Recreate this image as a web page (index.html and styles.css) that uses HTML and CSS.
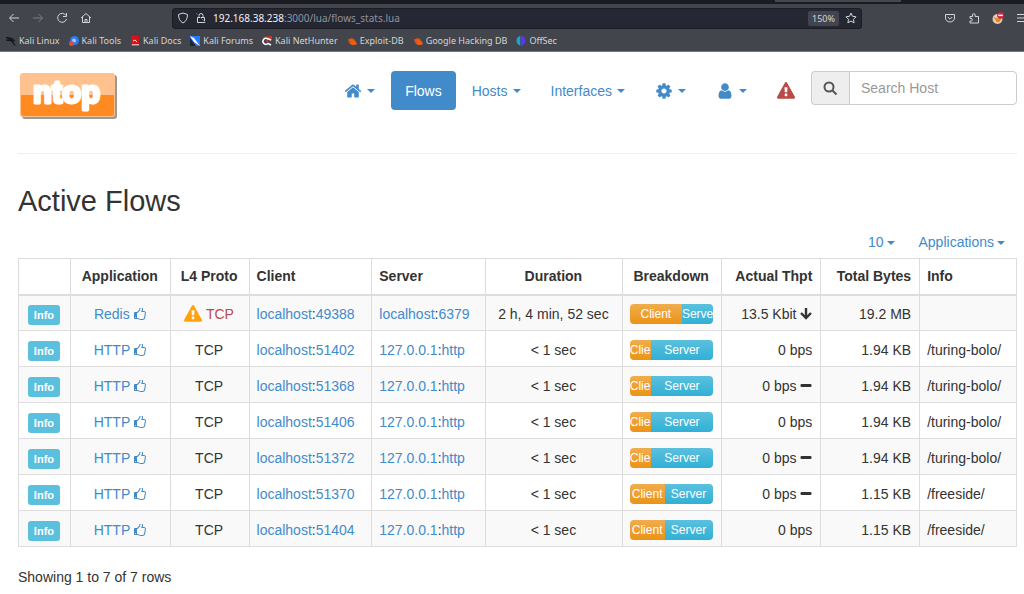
FILE: index.html
```html
<!DOCTYPE html>
<html lang="en">
    <head>
        <title>Active Flows</title>
        <meta charset="utf-8">
        <link rel="stylesheet" href="styles.css">
    </head>
    <body>
        <!-- icons -->
        <svg class="sprite">
            <symbol id="home" viewBox="0 0 1792 1792"><path d="M1472 992v480q0 26-19 45t-45 19h-384v-384h-256v384h-384q-26 0-45-19t-19-45v-480q0-1 .5-3t.5-3l575-474 575 474q1 2 1 6zm223-69l-62 74q-8 9-21 11h-3q-13 0-21-7l-692-577-692 577q-12 8-24 7-13-2-21-11l-62-74q-8-10-7-23.5t11-21.5l719-599q32-26 76-26t76 26l244 204v-195q0-14 9-23t23-9h192q14 0 23 9t9 23v408l219 182q10 8 11 21.5t-7 23.5z"/></symbol>
            <symbol id="cog" viewBox="0 0 1792 1792"><path d="M1152 896q0-106-75-181t-181-75-181 75-75 181 75 181 181 75 181-75 75-181zm512-109v222q0 12-8 23t-20 13l-185 28q-19 54-39 91 35 50 107 138 10 12 10 25t-9 23q-27 37-99 108t-94 71q-12 0-26-9l-138-108q-44 23-91 38-16 136-29 186-7 28-36 28h-222q-14 0-24.5-8.5t-11.5-21.5l-28-184q-49-16-90-37l-141 107q-10 9-25 9-14 0-25-11-126-114-165-168-7-10-7-23 0-12 8-23 15-21 51-66.5t54-70.5q-27-50-41-99l-183-27q-13-2-21-12.5t-8-23.5v-222q0-12 8-23t19-13l186-28q14-46 39-92-40-57-107-138-10-12-10-24 0-10 9-23 26-36 98.5-107.5t94.5-71.5q13 0 26 10l138 107q44-23 91-38 16-136 29-186 7-28 36-28h222q14 0 24.5 8.5t11.5 21.5l28 184q49 16 90 37l142-107q9-9 24-9 13 0 25 10 129 119 165 170 7 8 7 22 0 12-8 23-15 21-51 66.5t-54 70.5q26 50 41 98l183 28q13 2 21 12.5t8 23.5z"/></symbol>
            <symbol id="user" viewBox="0 0 1792 1792"><path d="M1536 1399q0 109-62.5 187t-150.5 78h-854q-88 0-150.5-78t-62.5-187q0-85 8.5-160.5t31.5-152 58.5-131 94-89 134.5-34.5q131 128 313 128t313-128q76 0 134.5 34.5t94 89 58.5 131 31.5 152 8.5 160.5zm-256-887q0 159-112.5 271.5t-271.5 112.5-271.5-112.5-112.5-271.5 112.5-271.5 271.5-112.5 271.5 112.5 112.5 271.5z"/></symbol>
            <symbol id="warning" viewBox="0 0 1792 1792"><path d="M1024 1375v-190q0-14-9.5-23.5t-22.5-9.5h-192q-13 0-22.5 9.5t-9.5 23.5v190q0 14 9.5 23.5t22.5 9.5h192q13 0 22.5-9.5t9.5-23.5zm-2-374l18-459q0-12-10-19-13-11-24-11h-220q-11 0-24 11-10 7-10 21l17 457q0 10 10 16.5t24 6.5h185q14 0 23.5-6.5t10.5-16.5zm-14-934l768 1408q35 63-2 126-17 29-46.5 46t-63.5 17h-1536q-34 0-63.5-17t-46.5-46q-37-63-2-126l768-1408q17-31 47-49t65-18 65 18 47 49z"/></symbol>
            <symbol id="thumb" viewBox="128 128 1536 1536"><path d="M384 1344q0-26-19-45t-45-19-45 19-19 45 19 45 45 19 45-19 19-45zm1152-576q0-51-39-89.5t-89-38.5h-352q0-58 48-159.5t48-160.5q0-98-32-145t-128-47q-26 26-38 85t-30.5 125.5-59.5 109.5q-22 23-77 91-4 5-23 30t-31.5 41-34.5 42.5-40 44-38.5 35.5-40 27-35.5 9h-32v640h32q13 0 31.5 3t33 6.5 38 11 35 11.5 35.5 12.5 29 10.5q211 73 342 73h121q192 0 192-167 0-26-5-56 30-16 47.5-52.5t17.5-73.5-18-69q53-50 53-119 0-25-10-55.5t-25-47.5q32-1 53.5-47t21.5-81zm128-1q0 89-49 163 9 33 9 69 0 77-38 144 3 21 3 43 0 101-60 178 1 139-85 219.5t-227 80.5h-129q-96 0-189.5-22.5t-216.5-65.5q-116-40-138-40h-288q-53 0-90.5-37.5t-37.5-90.5v-640q0-53 37.5-90.5t90.5-37.5h274q36-24 137-155 58-75 107-128 24-25 35.5-85.5t30.5-126.5 62-108q39-37 90-37 84 0 151 32.5t102 101.5 35 186q0 93-48 192h176q104 0 180 76t76 179z"/></symbol>
            <symbol id="down" viewBox="0 0 12 12"><path d="M6 0v9M1 5l5 5 5-5" fill="none" stroke="currentColor" stroke-width="2.400"/></symbol>
            <symbol id="minus" viewBox="0 0 12 12"><rect x="0.500" y="4" width="11" height="3" rx="1"/></symbol>
            <symbol id="spider" viewBox="0 0 10 10"><path d="M1 3l2 0 1-1 3 1 2 3 1 2-2 1-3 0-3-2z" fill="#ef5b10"/><path d="M0 4h3M2 7l2-2M5 1v3M9 4L7 5" stroke="#8b4324" stroke-width="0.600"/></symbol>
        </svg>

        <div class="browser">
            <div class="tabs"><span class="tab-line"></span></div>
            <div class="toolbar">
                <button class="tool" aria-label="Back"><svg viewBox="0 0 12 12"><path d="M11 6H2M5.500 2L1.500 6l4 4"/></svg></button>
                <button class="tool off" aria-label="Forward"><svg viewBox="0 0 12 12"><path d="M1 6h9M6.500 2l4 4-4 4"/></svg></button>
                <button class="tool" aria-label="Reload"><svg viewBox="0 0 12 12"><path d="M10 3.500A4.500 4.500 0 1 0 10.500 7M10.500 1v3.500H7"/></svg></button>
                <button class="tool" aria-label="Home"><svg viewBox="0 0 12 12"><path d="M1 6l5-4.500L11 6M2.500 5v5.500h7V5M5 10.500V7.500h2v3"/></svg></button>
                <div class="urlbar">
                    <svg class="tool-icon" viewBox="0 0 12 12"><path d="M6 1l4.500 1.500c0 4-1.500 7-4.500 8.500-3-1.500-4.500-4.500-4.500-8.500z"/></svg>
                    <svg class="tool-icon" viewBox="0 0 12 12"><path d="M4 5.500V3.500a2 2 0 0 1 4 0v2M2.500 5.500h7v5h-7z"/><path class="red" d="M1 1l10 10"/></svg>
                    <span class="url">192.168.38.238<span class="path">:3000/lua/flows_stats.lua</span></span>
                    <button class="zoom">150%</button>
                    <svg class="tool-icon" viewBox="0 0 12 12"><path d="M6 1l1.500 3.300 3.500.5-2.500 2.500.6 3.500L6 9.100l-3.100 1.700.6-3.500L1 4.800l3.500-.5z"/></svg>
                </div>
                <div class="extras">
                    <button class="tool" aria-label="Pocket"><svg viewBox="0 0 12 12"><path d="M1.500 2.500h9V6a4.500 4 0 0 1-9 0zM3.800 5L6 7.200 8.200 5"/></svg></button>
                    <button class="tool" aria-label="Extensions"><svg viewBox="0 0 12 12"><path d="M2 4.500h2.500V3a1.300 1.300 0 0 1 2.600 0v1.500h3.400v6.500H2V9h1a1.300 1.300 0 0 0 0-2.600H2z"/></svg></button>
                    <button class="tool" aria-label="FoxyProxy"><svg viewBox="0 0 12 12"><g stroke="none"><circle cx="5.500" cy="7" r="5" fill="#e6cdb5"/><path d="M1.500 5l4 1.500L9.500 5 8 9.500l-3 1z" fill="#e8832a"/><circle cx="8.500" cy="3.300" r="3.400" fill="#d4203c"/><path d="M6.200 2.600h4.600v1.500H6.200z" fill="#fff"/></g></svg></button>
                    <button class="tool" aria-label="Menu"><svg viewBox="0 0 12 12"><path d="M1 2.500h11M1 6h11M1 9.500h11"/></svg></button>
                </div>
            </div>
            <nav class="bookmarks">
                <a href="#"><svg viewBox="0 0 10 10"><path d="M0 1.500l6 1 2 2-3 0M0 4l5 .5 2 2 2 3M2 2l4 3" fill="none" stroke="#15161a" stroke-width="1.300"/></svg>Kali Linux</a>
                <a href="#"><svg viewBox="0 0 10 10"><circle cx="5.500" cy="4.500" r="4.500" fill="#2b7af0"/><circle cx="5" cy="4.500" r="2" fill="#a9cbf8"/><circle cx="2.500" cy="7.500" r="2.500" fill="#e8453c"/></svg>Kali Tools</a>
                <a href="#"><svg viewBox="0 0 10 10"><path d="M1 0h8v10H1z" fill="#d3141c"/><path d="M3 5l2-1 2 2M2 8.800h7" fill="none" stroke="#fff" stroke-width="0.900"/></svg>Kali Docs</a>
                <a href="#"><svg viewBox="0 0 10 10"><path d="M0 0h10v10H0z" fill="#2777ff"/><path d="M0 0l4 2 6 8-6-4z" fill="#fff"/><path d="M0 2l6 8H0z" fill="#20242c"/></svg>Kali Forums</a>
                <a href="#"><svg viewBox="0 0 10 10"><path d="M0 1l10-1v5L6 3z" fill="#e02c2c"/><path d="M9 4L5 2.500a3 3 0 1 0 1 5L9 9" fill="none" stroke="#fff" stroke-width="1.500"/><path d="M3 4l4 1-2 2z" fill="#e02c2c"/></svg>Kali NetHunter</a>
                <a href="#"><svg><use href="#spider"/></svg>Exploit-DB</a>
                <a href="#"><svg><use href="#spider"/></svg>Google Hacking DB</a>
                <a href="#"><svg viewBox="0 0 10 10"><path d="M4 0v9.500A5 5 0 0 1 4 0" fill="#17a5cf"/><path d="M6 0v9.500A5 5 0 0 0 6 0" fill="#563bea"/><path d="M5 0v10" stroke="#3474dd" stroke-width="0.800"/></svg>OffSec</a>
            </nav>
        </div>

        <div class="container">
            <header class="masthead">
                <a class="logo" href="#">
                    <svg width="100" height="50" viewBox="0 0 100 50">
                        <rect x="4" y="4" width="95" height="44" rx="3" fill="#999"/>
                        <rect x="2" y="2" width="95" height="44" rx="3" fill="#ffc18d"/>
                        <path d="M3 24h93v19q0 2-2 2H5q-2 0-2-2z" fill="#ff8a22"/>
                        <text x="15" y="32">ntop</text>
                    </svg>
                </a>
                <nav class="nav">
                    <a href="#" aria-label="Home"><svg class="icon"><use href="#home"/></svg><b class="caret"></b></a>
                    <a href="#" class="active">Flows</a>
                    <a href="#">Hosts<b class="caret"></b></a>
                    <a href="#">Interfaces<b class="caret"></b></a>
                    <a href="#" aria-label="Settings"><svg class="icon"><use href="#cog"/></svg><b class="caret"></b></a>
                    <a href="#" aria-label="User"><svg class="icon"><use href="#user"/></svg><b class="caret"></b></a>
                    <a href="#" class="alert" aria-label="Alerts"><svg class="icon"><use href="#warning"/></svg></a>
                </nav>
                <form class="search">
                    <label for="host"><svg width="15" height="15" viewBox="0 0 15 15"><circle cx="6" cy="6" r="4.500"/><path d="M9.500 9.500l4 4"/></svg></label>
                    <input id="host" type="text" placeholder="Search Host">
                </form>
            </header>

            <h2>Active Flows</h2>

            <div class="filters">
                <a href="#">10<b class="caret"></b></a>
                <a href="#">Applications<b class="caret"></b></a>
            </div>

            <table class="flows">
                <colgroup>
                    <col class="c-btn"><col class="c-app"><col class="c-proto"><col class="c-client"><col class="c-server">
                    <col class="c-dur"><col class="c-break"><col class="c-thpt"><col class="c-bytes"><col class="c-info">
                </colgroup>
                <thead>
                    <tr>
                        <th></th>
                        <th class="center">Application</th>
                        <th class="center">L4 Proto</th>
                        <th>Client</th>
                        <th>Server</th>
                        <th class="center">Duration</th>
                        <th class="center">Breakdown</th>
                        <th class="right">Actual Thpt</th>
                        <th class="right">Total Bytes</th>
                        <th>Info</th>
                    </tr>
                </thead>
                <tbody>
                    <tr>
                        <td class="center"><a href="#" class="label">Info</a></td>
                        <td class="center"><a href="#">Redis <svg class="thumb"><use href="#thumb"/></svg></a></td>
                        <td class="center danger"><svg class="warn"><use href="#warning"/></svg> TCP</td>
                        <td><a href="#">localhost</a>:<a href="#">49388</a></td>
                        <td><a href="#">localhost</a>:<a href="#">6379</a></td>
                        <td class="center">2 h, 4 min, 52 sec</td>
                        <td><div class="progress"><div class="bar client" style="width: 63%">Client</div><div class="bar server" style="width: 37%">Server</div></div></td>
                        <td class="right">13.5 Kbit <svg class="trend"><use href="#down"/></svg></td>
                        <td class="right">19.2 MB</td>
                        <td></td>
                    </tr>
                    <tr>
                        <td class="center"><a href="#" class="label">Info</a></td>
                        <td class="center"><a href="#">HTTP <svg class="thumb"><use href="#thumb"/></svg></a></td>
                        <td class="center">TCP</td>
                        <td><a href="#">localhost</a>:<a href="#">51402</a></td>
                        <td><a href="#">127.0.0.1</a>:<a href="#">http</a></td>
                        <td class="center">&lt; 1 sec</td>
                        <td><div class="progress"><div class="bar client" style="width: 26%">Client</div><div class="bar server" style="width: 74%">Server</div></div></td>
                        <td class="right">0 bps</td>
                        <td class="right">1.94 KB</td>
                        <td>/turing-bolo/</td>
                    </tr>
                    <tr>
                        <td class="center"><a href="#" class="label">Info</a></td>
                        <td class="center"><a href="#">HTTP <svg class="thumb"><use href="#thumb"/></svg></a></td>
                        <td class="center">TCP</td>
                        <td><a href="#">localhost</a>:<a href="#">51368</a></td>
                        <td><a href="#">127.0.0.1</a>:<a href="#">http</a></td>
                        <td class="center">&lt; 1 sec</td>
                        <td><div class="progress"><div class="bar client" style="width: 26%">Client</div><div class="bar server" style="width: 74%">Server</div></div></td>
                        <td class="right">0 bps <svg class="trend"><use href="#minus"/></svg></td>
                        <td class="right">1.94 KB</td>
                        <td>/turing-bolo/</td>
                    </tr>
                    <tr>
                        <td class="center"><a href="#" class="label">Info</a></td>
                        <td class="center"><a href="#">HTTP <svg class="thumb"><use href="#thumb"/></svg></a></td>
                        <td class="center">TCP</td>
                        <td><a href="#">localhost</a>:<a href="#">51406</a></td>
                        <td><a href="#">127.0.0.1</a>:<a href="#">http</a></td>
                        <td class="center">&lt; 1 sec</td>
                        <td><div class="progress"><div class="bar client" style="width: 26%">Client</div><div class="bar server" style="width: 74%">Server</div></div></td>
                        <td class="right">0 bps</td>
                        <td class="right">1.94 KB</td>
                        <td>/turing-bolo/</td>
                    </tr>
                    <tr>
                        <td class="center"><a href="#" class="label">Info</a></td>
                        <td class="center"><a href="#">HTTP <svg class="thumb"><use href="#thumb"/></svg></a></td>
                        <td class="center">TCP</td>
                        <td><a href="#">localhost</a>:<a href="#">51372</a></td>
                        <td><a href="#">127.0.0.1</a>:<a href="#">http</a></td>
                        <td class="center">&lt; 1 sec</td>
                        <td><div class="progress"><div class="bar client" style="width: 26%">Client</div><div class="bar server" style="width: 74%">Server</div></div></td>
                        <td class="right">0 bps <svg class="trend"><use href="#minus"/></svg></td>
                        <td class="right">1.94 KB</td>
                        <td>/turing-bolo/</td>
                    </tr>
                    <tr>
                        <td class="center"><a href="#" class="label">Info</a></td>
                        <td class="center"><a href="#">HTTP <svg class="thumb"><use href="#thumb"/></svg></a></td>
                        <td class="center">TCP</td>
                        <td><a href="#">localhost</a>:<a href="#">51370</a></td>
                        <td><a href="#">127.0.0.1</a>:<a href="#">http</a></td>
                        <td class="center">&lt; 1 sec</td>
                        <td><div class="progress"><div class="bar client" style="width: 42%">Client</div><div class="bar server" style="width: 58%">Server</div></div></td>
                        <td class="right">0 bps <svg class="trend"><use href="#minus"/></svg></td>
                        <td class="right">1.15 KB</td>
                        <td>/freeside/</td>
                    </tr>
                    <tr>
                        <td class="center"><a href="#" class="label">Info</a></td>
                        <td class="center"><a href="#">HTTP <svg class="thumb"><use href="#thumb"/></svg></a></td>
                        <td class="center">TCP</td>
                        <td><a href="#">localhost</a>:<a href="#">51404</a></td>
                        <td><a href="#">127.0.0.1</a>:<a href="#">http</a></td>
                        <td class="center">&lt; 1 sec</td>
                        <td><div class="progress"><div class="bar client" style="width: 42%">Client</div><div class="bar server" style="width: 58%">Server</div></div></td>
                        <td class="right">0 bps</td>
                        <td class="right">1.15 KB</td>
                        <td>/freeside/</td>
                    </tr>
                </tbody>
            </table>

            <p class="count">Showing 1 to 7 of 7 rows</p>
        </div>
    </body>
</html>
```
FILE: styles.css
```css
* {
    box-sizing: border-box;
}
body {
    margin: 0;
    background-color: white;
    color: #333;
    font-family: "Liberation Sans", Arial, sans-serif;
    font-size: 14px;
    line-height: 20px;
}
a {
    color: #428bca;
    text-decoration: none;
}
svg {
    fill: currentColor;
}
.sprite {
    display: none;
}

/* browser bar */
.browser {
    overflow: hidden;
    background-color: #42454c;
    border-bottom: 1px solid #77787c;
    color: #d4d5d8;
    font-family: "Noto Sans", sans-serif;
    font-size: 9px;
}
.tabs {
    display: flex;
    justify-content: flex-end;
    height: 4px;
    padding-right: 12%;
    background-color: #1b1c22;
}
.tab-line {
    width: 14%;
    height: 2px;
    background-color: #45474e;
}
.toolbar {
    display: flex;
    align-items: center;
    height: 28px;
    padding-left: 8px;
}
.tool {
    display: flex;
    width: 12px;
    margin-right: 12px;
    padding: 0;
    border: none;
    background: none;
    color: inherit;
}
.tool.off {
    color: #7d7f85;
}
.tool svg,
.tool-icon {
    flex: none;
    width: 12px;
    height: 12px;
    fill: none;
    stroke: currentColor;
}
.tool-icon .red {
    stroke: #e22850;
}
.urlbar {
    display: flex;
    flex: 1;
    align-items: center;
    gap: 6px;
    height: 21px;
    margin-left: 68px;
    padding: 0 4px;
    border: 1px solid #1b1c24;
    border-radius: 3px;
    background-color: #252733;
}
.url {
    flex: 1;
    color: #f2f2f4;
    font-size: 10px;
}
.path {
    color: #92939b;
}
.zoom {
    height: 15px;
    padding: 0 4px;
    border: none;
    border-radius: 2px;
    background-color: #42454f;
    color: #d4d5d8;
    font-family: inherit;
    font-size: 9px;
}
.extras {
    display: flex;
    margin-left: 82px;
}
.extras .tool:last-child {
    margin-right: -4px;
}
.bookmarks {
    display: flex;
    align-items: center;
    gap: 9px;
    height: 19px;
    padding: 0 0 1px 6px;
}
.bookmarks a {
    display: flex;
    align-items: center;
    gap: 3px;
    color: #d4d5d8;
    white-space: nowrap;
}
.bookmarks svg {
    width: 10px;
    height: 10px;
}

/* page */
.container {
    padding: 19px 7px 0 18px;
}
.masthead {
    display: flex;
    align-items: flex-start;
    height: 83px;
    border-bottom: 1px solid #eee;
}
.logo {
    margin-right: auto;
}
.logo text {
    fill: white;
    stroke: white;
    stroke-width: 3px;
    stroke-linejoin: round;
    font-size: 31px;
    font-weight: bold;
}
.nav {
    display: flex;
    gap: 2px;
    margin-right: 2px;
}
.nav a {
    display: flex;
    align-items: center;
    height: 39px;
    padding: 0 14px;
    border-radius: 4px;
}
.nav .active {
    background-color: #428bca;
    color: white;
}
.nav .alert {
    color: #b94a48;
}
.icon {
    width: 18px;
    height: 18px;
}
.caret {
    display: inline-block;
    margin-left: 5px;
    border-top: 4px solid;
    border-left: 4px solid transparent;
    border-right: 4px solid transparent;
    vertical-align: middle;
}
.search {
    display: flex;
    width: 206px;
    height: 34px;
}
.search label {
    display: flex;
    align-items: center;
    justify-content: center;
    width: 38px;
    border: 1px solid #ccc;
    border-right: none;
    border-radius: 4px 0 0 4px;
    background-color: #eee;
    color: #555;
}
.search svg {
    fill: none;
    stroke: currentColor;
    stroke-width: 2px;
}
.search input {
    flex: 1;
    min-width: 0;
    padding: 0 11px;
    border: 1px solid #ccc;
    border-radius: 0 4px 4px 0;
    font: inherit;
}
.search input::placeholder {
    color: #999;
}
h2 {
    margin: 31px 0 15px;
    font-size: 29px;
    font-weight: normal;
    line-height: 32px;
}
.filters {
    display: flex;
    justify-content: flex-end;
    gap: 24px;
    margin-bottom: 6px;
    padding-right: 12px;
}
.filters .caret {
    margin-left: 3px;
}
.flows {
    width: 100%;
    border-collapse: collapse;
    table-layout: fixed;
}
.flows th,
.flows td {
    height: 36px;
    padding: 0 8px 0 7px;
    border: 1px solid #ddd;
    text-align: left;
    white-space: nowrap;
}
.flows td {
    padding-top: 2px;
}
.flows th {
    border-bottom-width: 2px;
}
.flows tbody tr:nth-child(odd) {
    background-color: #f9f9f9;
}
.flows .center {
    text-align: center;
}
.flows .right {
    text-align: right;
}
.flows .danger {
    color: #b94a48;
}
.c-btn { width: 5.2%; }
.c-app { width: 10%; }
.c-proto { width: 7.9%; }
.c-client { width: 12.3%; }
.c-server { width: 11.4%; }
.c-dur { width: 13.7%; }
.c-break { width: 9.9%; }
.c-thpt { width: 10%; }
.c-bytes { width: 9.9%; }
.c-info { width: 9.7%; }
.label {
    display: inline-block;
    margin-top: 2px;
    padding: 0 6px;
    border-radius: 3px;
    background-color: #5bc0de;
    color: white;
    font-size: 11px;
    font-weight: bold;
    vertical-align: middle;
}
.thumb,
.trend {
    width: 12px;
    height: 12px;
    vertical-align: -1px;
}
.warn {
    width: 18px;
    height: 18px;
    color: #ffa20d;
    vertical-align: -4px;
}
.progress {
    display: flex;
    height: 20px;
    overflow: hidden;
    border-radius: 4px;
}
.bar {
    overflow: hidden;
    color: white;
    font-size: 12px;
    text-align: center;
}
.client {
    background: linear-gradient(#f0ad4e, #eb9316);
}
.server {
    background: linear-gradient(#5bc0de, #31b0d5);
}
.count {
    margin: 20px 0 0;
}
```
